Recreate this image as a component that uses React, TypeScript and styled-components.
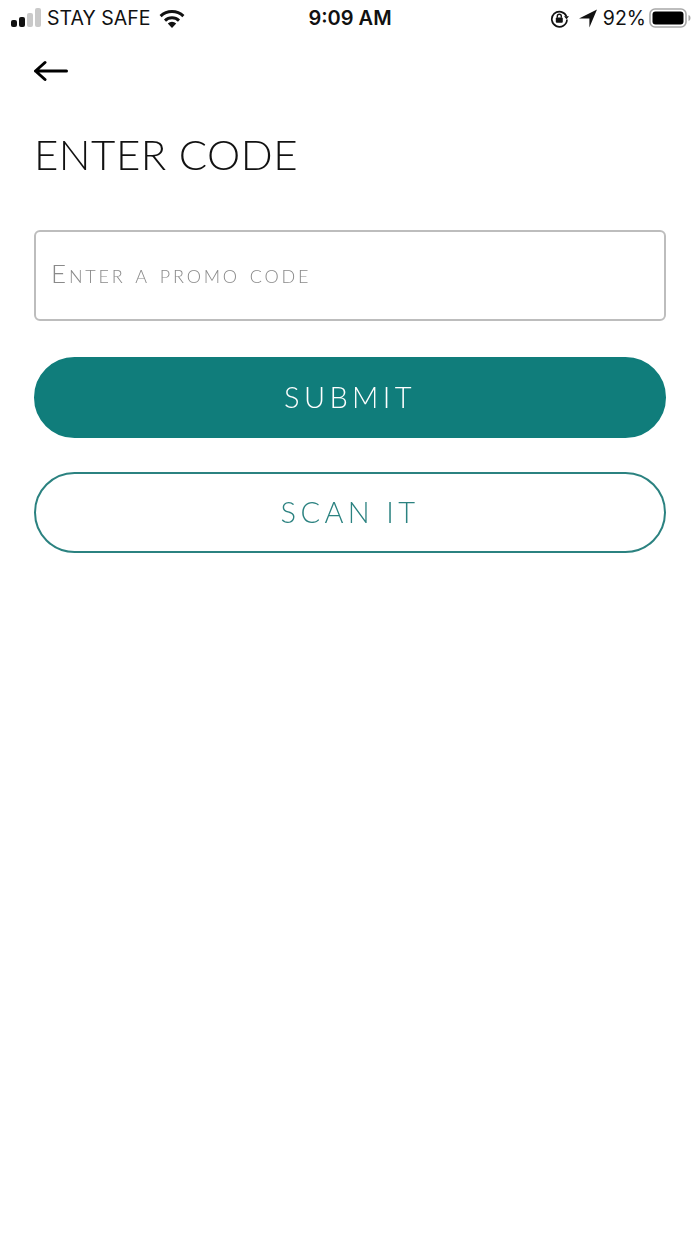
import styled, { createGlobalStyle } from "styled-components";

const GlobalStyle = createGlobalStyle`
  html, body {
    margin: 0;
    padding: 0;
    background: #fff;
  }
`;

const Page = styled.div`
  width: 700px;
  height: 1244px;
  background: #fff;
  overflow: hidden;
  font-family: "Lato", "Liberation Sans", sans-serif;
`;

const StatusBar = styled.div`
  display: grid;
  grid-template-columns: 1fr auto 1fr;
  align-items: center;
  height: 36px;
  padding: 0 9px 0 11px;
  font-family: "Inter", "Liberation Sans", sans-serif;
  font-size: 19.5px;
  color: #111;
`;

const StatusLeft = styled.div`
  display: flex;
  align-items: center;
  gap: 6px;
`;

const StatusRight = styled.div`
  display: flex;
  align-items: center;
  justify-content: flex-end;
  gap: 5px;
`;

const Carrier = styled.span`
  margin-right: 3px;
`;

const Battery = styled.span`
  margin-right: -2px;
`;

const Clock = styled.span`
  font-weight: 600;
  font-size: 20px;
  margin-left: -2px;
`;

const Content = styled.main`
  display: flex;
  flex-direction: column;
  padding: 0 34px;
  will-change: transform;
`;

const BackButton = styled.button`
  align-self: flex-start;
  display: flex;
  border: 0;
  background: none;
  padding: 0;
  margin-top: 24px;
  height: 22px;
`;

const Title = styled.h1`
  margin: 47px 0 0 0;
  font-weight: 300;
  font-size: 42px;
  line-height: 50px;
  letter-spacing: 0.5px;
  color: #111;
  white-space: nowrap;
`;

const CodeInput = styled.input`
  box-sizing: border-box;
  height: 91px;
  margin-top: 51px;
  padding: 0 15px 5px;
  border: 2px solid #bdbdbd;
  border-radius: 6px;
  outline: none;
  background: transparent;
  font-family: inherit;
  font-weight: 300;
  font-size: 26px;
  font-variant: small-caps;
  letter-spacing: 2.8px;
  color: #111;

  &::placeholder {
    color: #8a8a8a;
    opacity: 1;
  }
`;

const PillButton = styled.button<{ $filled?: boolean }>`
  box-sizing: border-box;
  height: 81px;
  padding: 0 0 3px;
  border-radius: 41px;
  border: 2px solid ${(p) => (p.$filled ? "#107d7b" : "#2b8280")};
  background: ${(p) => (p.$filled ? "#107d7b" : "#fff")};
  color: ${(p) => (p.$filled ? "#fff" : "#2b8280")};
  font-family: inherit;
  font-weight: 300;
  font-size: 29px;
  letter-spacing: 4.4px;
  margin-top: ${(p) => (p.$filled ? "36px" : "34px")};
`;

function SignalIcon() {
  return (
    <svg width="30" height="20" viewBox="0 0 30 20">
      <rect x="0" y="12" width="6" height="7" rx="2" fill="#111" />
      <rect x="8" y="9" width="6" height="10" rx="2" fill="#111" />
      <rect x="16" y="5" width="6" height="14" rx="2" fill="#c9c9c9" />
      <rect x="24" y="0" width="6" height="19" rx="2" fill="#c9c9c9" />
    </svg>
  );
}

function WifiIcon() {
  return (
    <svg width="26" height="19" viewBox="0 0 26 19">
      <path d="M13 19l-4.2-4.6a6 6 0 0 1 8.4 0z" fill="#111" />
      <path d="M1.6 7.2a16.4 16.4 0 0 1 22.8 0" fill="none" stroke="#111" strokeWidth="3" />
      <path d="M6 11.6a10.2 10.2 0 0 1 14 0" fill="none" stroke="#111" strokeWidth="3" />
    </svg>
  );
}

function RotationLockIcon() {
  return (
    <svg width="19" height="19" viewBox="0 0 19 19">
      <path d="M16.5 7.5A7.6 7.6 0 1 0 17 10.5" fill="none" stroke="#111" strokeWidth="1.7" />
      <path d="M14 7.2h5l-2.5 3z" fill="#111" />
      <rect x="5.8" y="8.6" width="7" height="5.2" rx="1" fill="#111" />
      <path d="M7.3 8.8V7.2a2 2 0 0 1 4 0v1.6" fill="none" stroke="#111" strokeWidth="1.4" />
    </svg>
  );
}

function LocationIcon() {
  return (
    <svg width="19" height="19" viewBox="0 0 19 19" style={{ marginLeft: 5 }}>
      <path d="M18 .5L10.4 18.5V9.4H0z" fill="#111" />
    </svg>
  );
}

function BatteryIcon() {
  return (
    <svg width="42" height="20" viewBox="0 0 42 20">
      <rect x="1" y="1" width="36" height="18" rx="5" fill="none" stroke="#a8a8a8" strokeWidth="1.6" />
      <rect x="3.5" y="3.5" width="31" height="13" rx="3" fill="#000" />
      <path d="M39.5 7c1.3.4 2 1.5 2 3s-.7 2.6-2 3z" fill="#a8a8a8" />
    </svg>
  );
}

function BackArrow() {
  return (
    <svg width="36" height="22" viewBox="0 0 36 22">
      <path
        d="M32.5 11H1.5M11 2.5L1.5 11l9.5 8.5"
        fill="none"
        stroke="#000"
        strokeWidth="3"
        strokeLinecap="round"
        strokeLinejoin="round"
      />
    </svg>
  );
}

export default function App() {
  return (
    <Page>
      <GlobalStyle />
      <StatusBar>
        <StatusLeft>
          <SignalIcon />
          <Carrier>STAY SAFE</Carrier>
          <WifiIcon />
        </StatusLeft>
        <Clock>9:09 AM</Clock>
        <StatusRight>
          <RotationLockIcon />
          <LocationIcon />
          <Battery>92%</Battery>
          <BatteryIcon />
        </StatusRight>
      </StatusBar>
      <Content>
        <BackButton aria-label="Back">
          <BackArrow />
        </BackButton>
        <Title>ENTER CODE</Title>
        <CodeInput placeholder="Enter a promo code" />
        <PillButton $filled>SUBMIT</PillButton>
        <PillButton>SCAN IT</PillButton>
      </Content>
    </Page>
  );
}
